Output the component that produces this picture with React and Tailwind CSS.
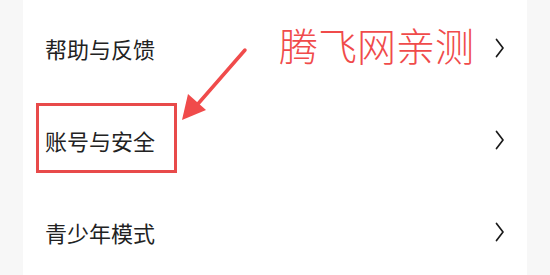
import React from "react";

const rows = ["帮助与反馈", "账号与安全", "青少年模式"];

function Chevron() {
  return (
    <svg width="10" height="20" viewBox="0 0 10 20" fill="none" aria-hidden="true">
      <path d="M1.5 1.5L8 10L1.5 18.5" stroke="#1a1a1a" strokeWidth="1.7" strokeLinecap="round" strokeLinejoin="round" />
    </svg>
  );
}

export default function App() {
  return (
    <div
      className="relative w-[550px] h-[275px] bg-[#f7f7f7] overflow-hidden"
      style={{ fontFamily: '"Noto Sans CJK SC", "Noto Sans", sans-serif' }}
    >
      <div className="mx-[23px] h-full bg-white pt-[2px]">
        {rows.map((label) => (
          <div key={label} className="flex items-center justify-between h-[92px] pl-[22px] pr-[22px]">
            <span className="text-[22px] leading-none text-[#222]">{label}</span>
            <Chevron />
          </div>
        ))}
      </div>

      {/* annotation overlay */}
      <div className="absolute left-[36px] top-[103px] w-[141px] h-[70px] border-[3px] border-[#e84a4a]" />
      <div className="absolute left-[279px] top-[25px] text-[39px] font-light leading-none text-[#f04b4b]">腾飞网亲测</div>
      <svg className="absolute left-0 top-0" width="550" height="275" viewBox="0 0 550 275" aria-hidden="true">
        <line x1="245" y1="50" x2="197" y2="105" stroke="#f04b4b" strokeWidth="3.5" strokeLinecap="round" />
        <polygon points="182,120 188,94 206,110" fill="#f04b4b" />
      </svg>
    </div>
  );
}
